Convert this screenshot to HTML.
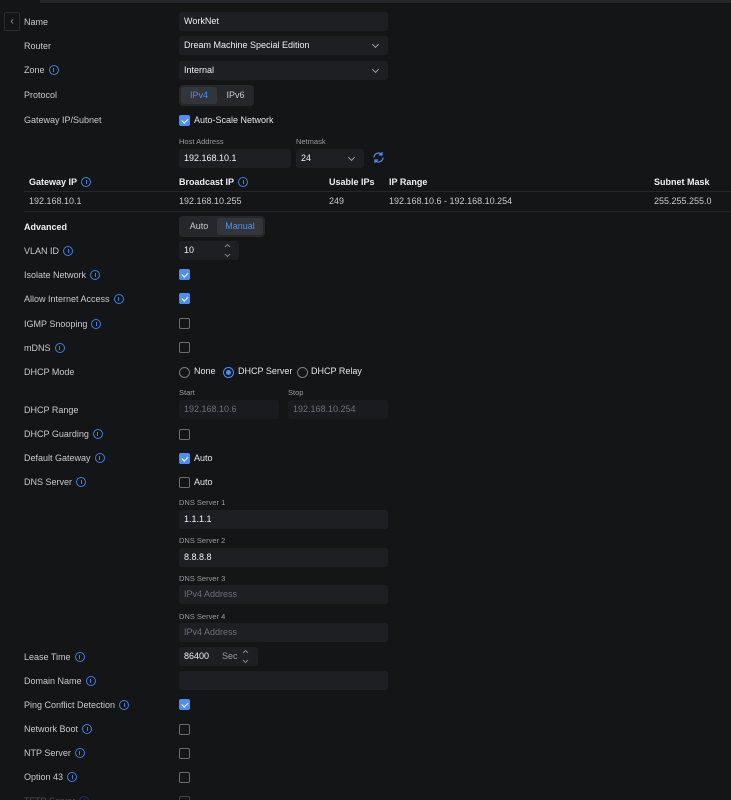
<!DOCTYPE html><html><head><meta charset="utf-8"><style>
html{width:731px;height:800px;overflow:hidden;background:#141517}
body{margin:0;width:731px;height:800px;background:#141517;font-family:"Liberation Sans",sans-serif;font-size:9px;color:#c9cacd;position:relative;overflow:hidden}
.a{position:absolute}
.l{position:absolute;left:24px;line-height:12px;white-space:nowrap}
.in{position:absolute;left:179px;width:209px;height:19px;background:#1e1f22;border-radius:3px;color:#eef0f3;line-height:19px;padding-left:5px;box-sizing:border-box;white-space:nowrap}
.i{display:inline-block;width:8px;height:8px;border:1px solid #3f7fe0;border-radius:50%;vertical-align:-2px;margin-left:4px;position:relative}
.i:after{content:"";position:absolute;left:3.5px;top:2px;width:1px;height:4px;background:#3f7fe0}
.cb{position:absolute;left:179px;width:9px;height:9px;border:1px solid #6b6d72;border-radius:2px}
.ck{position:absolute;left:179px;width:11px;height:11px;background:#4b8ff5;border-radius:2px}
.ck:after{content:"";position:absolute;left:3.5px;top:1.5px;width:2.5px;height:5px;border:solid #fff;border-width:0 1.2px 1.2px 0;transform:rotate(45deg)}
.sm{position:absolute;font-size:7.5px;color:#9a9ca1}
.ch{position:absolute;right:10px;top:6px;width:4px;height:4px;border:solid #9a9ca1;border-width:0 1px 1px 0;transform:rotate(45deg)}
.ph{color:#6d7076}
.b{color:#eef0f3;font-weight:bold}
.sp{position:absolute;top:2px}
</style></head><body>
<div class="a" style="left:40px;top:0;width:691px;height:3px;background:#24262a"></div>
<div class="a" style="left:4px;top:12px;width:16px;height:19px;border:1px solid #2a2c30;border-radius:2px;box-sizing:border-box;color:#aaa;font-size:10px;line-height:17px;text-align:center">‹</div>

<div class="l" style="top:16px">Name</div><div class="in" style="top:12px">WorkNet</div>
<div class="l" style="top:40px">Router</div><div class="in" style="top:36px">Dream Machine Special Edition<span class="ch"></span></div>
<div class="l" style="top:64px">Zone<span class="i"></span></div><div class="in" style="top:61px">Internal<span class="ch"></span></div>
<div class="l" style="top:89px">Protocol</div>
<div class="a" style="left:179px;top:85px;width:75px;height:21px;background:#25272b;border-radius:4px"></div>
<div class="a" style="left:181px;top:87px;width:36px;height:17px;background:#32353a;border-radius:3px;color:#4b8ff5;text-align:center;line-height:17px">IPv4</div>
<div class="a" style="left:219px;top:87px;width:33px;height:17px;text-align:center;line-height:17px">IPv6</div>
<div class="l" style="top:114px">Gateway IP/Subnet</div>
<div class="ck" style="top:115px"></div><div class="a" style="left:194px;top:115px;color:#e6e7ea">Auto-Scale Network</div>
<div class="sm" style="left:179px;top:137px">Host Address</div>
<div class="sm" style="left:296px;top:137px">Netmask</div>
<div class="in" style="top:149px;width:112px">192.168.10.1</div>
<div class="in" style="top:149px;left:296px;width:68px">24<span class="ch"></span></div>
<svg class="a" style="left:372px;top:151px" width="13" height="13" viewBox="0 0 13 13" fill="none" stroke="#4b8ff5" stroke-width="1.2"><path d="M2 6.5a4.5 4.5 0 0 1 8-2.8M11 6.5a4.5 4.5 0 0 1-8 2.8M10 1v3H7M3 12V9h3"/></svg>

<div class="a b" style="left:29px;top:177px">Gateway IP<span class="i"></span></div>
<div class="a b" style="left:179px;top:177px">Broadcast IP<span class="i"></span></div>
<div class="a b" style="left:329px;top:177px">Usable IPs</div>
<div class="a b" style="left:389px;top:177px">IP Range</div>
<div class="a b" style="left:654px;top:177px">Subnet Mask</div>
<div class="a" style="left:24px;top:191px;width:707px;height:1px;background:#25272b"></div>
<div class="a" style="left:29px;top:196px">192.168.10.1</div>
<div class="a" style="left:179px;top:196px">192.168.10.255</div>
<div class="a" style="left:329px;top:196px">249</div>
<div class="a" style="left:389px;top:196px">192.168.10.6 - 192.168.10.254</div>
<div class="a" style="left:654px;top:196px">255.255.255.0</div>
<div class="a" style="left:24px;top:211px;width:707px;height:1px;background:#25272b"></div>

<div class="l b" style="top:221px">Advanced</div>
<div class="a" style="left:179px;top:216px;width:86px;height:21px;background:#25272b;border-radius:4px"></div>
<div class="a" style="left:181px;top:218px;width:36px;height:17px;text-align:center;line-height:17px">Auto</div>
<div class="a" style="left:217px;top:218px;width:46px;height:17px;background:#32353a;border-radius:3px;color:#4b8ff5;text-align:center;line-height:17px">Manual</div>
<div class="l" style="top:245px">VLAN ID<span class="i"></span></div>
<div class="in" style="top:241px;width:60px">10<svg class="sp" style="left:45px" width="7" height="15" viewBox="0 0 7 15" fill="none" stroke="#8a8c91" stroke-width="0.9"><path d="M1 4l2.5-2.5L6 4M1 11l2.5 2.5L6 11"/></svg></div>
<div class="l" style="top:269px">Isolate Network<span class="i"></span></div><div class="ck" style="top:269px"></div>
<div class="l" style="top:293px">Allow Internet Access<span class="i"></span></div><div class="ck" style="top:293px"></div>
<div class="l" style="top:318px">IGMP Snooping<span class="i"></span></div><div class="cb" style="top:318px"></div>
<div class="l" style="top:342px">mDNS<span class="i"></span></div><div class="cb" style="top:342px"></div>
<div class="l" style="top:366px">DHCP Mode</div>
<div class="a" style="left:179px;top:367px;width:9px;height:9px;border:1px solid #7a7c81;border-radius:50%"></div><div class="a" style="left:194px;top:366px;color:#e6e7ea">None</div>
<div class="a" style="left:223px;top:367px;width:9px;height:9px;border:1px solid #4b8ff5;border-radius:50%"></div><div class="a" style="left:226px;top:370px;width:5px;height:5px;background:#4b8ff5;border-radius:50%"></div><div class="a" style="left:238px;top:366px;color:#e6e7ea">DHCP Server</div>
<div class="a" style="left:297px;top:367px;width:9px;height:9px;border:1px solid #7a7c81;border-radius:50%"></div><div class="a" style="left:311px;top:366px;color:#e6e7ea">DHCP Relay</div>
<div class="sm" style="left:179px;top:388px">Start</div><div class="sm" style="left:288px;top:388px">Stop</div>
<div class="l" style="top:404px">DHCP Range</div>
<div class="in ph" style="top:400px;width:100px;background:#1a1b1e">192.168.10.6</div>
<div class="in ph" style="top:400px;left:288px;width:100px;background:#1a1b1e">192.168.10.254</div>
<div class="l" style="top:428px">DHCP Guarding<span class="i"></span></div><div class="cb" style="top:429px"></div>
<div class="l" style="top:452px">Default Gateway<span class="i"></span></div><div class="ck" style="top:453px"></div><div class="a" style="left:194px;top:453px;color:#e6e7ea">Auto</div>
<div class="l" style="top:476px">DNS Server<span class="i"></span></div><div class="cb" style="top:477px"></div><div class="a" style="left:194px;top:477px;color:#e6e7ea">Auto</div>
<div class="sm" style="left:179px;top:498px">DNS Server 1</div><div class="in" style="top:510px">1.1.1.1</div>
<div class="sm" style="left:179px;top:536px">DNS Server 2</div><div class="in" style="top:548px">8.8.8.8</div>
<div class="sm" style="left:179px;top:574px">DNS Server 3</div><div class="in ph" style="top:585px">IPv4 Address</div>
<div class="sm" style="left:179px;top:612px">DNS Server 4</div><div class="in ph" style="top:623px">IPv4 Address</div>
<div class="l" style="top:651px">Lease Time<span class="i"></span></div>
<div class="in" style="top:647px;width:79px">86400<span class="a" style="left:43px;color:#9a9ca1">Sec</span><svg class="sp" style="left:63px" width="7" height="15" viewBox="0 0 7 15" fill="none" stroke="#8a8c91" stroke-width="0.9"><path d="M1 4l2.5-2.5L6 4M1 11l2.5 2.5L6 11"/></svg></div>
<div class="l" style="top:675px">Domain Name<span class="i"></span></div><div class="in" style="top:671px"></div>
<div class="l" style="top:699px">Ping Conflict Detection<span class="i"></span></div><div class="ck" style="top:699px"></div>
<div class="l" style="top:723px">Network Boot<span class="i"></span></div><div class="cb" style="top:724px"></div>
<div class="l" style="top:747px">NTP Server<span class="i"></span></div><div class="cb" style="top:748px"></div>
<div class="l" style="top:771px">Option 43<span class="i"></span></div><div class="cb" style="top:772px"></div>
<div class="l" style="top:795px;opacity:.3">TFTP Server<span class="i"></span></div><div class="cb" style="top:796px;opacity:.5"></div>
</body></html>
